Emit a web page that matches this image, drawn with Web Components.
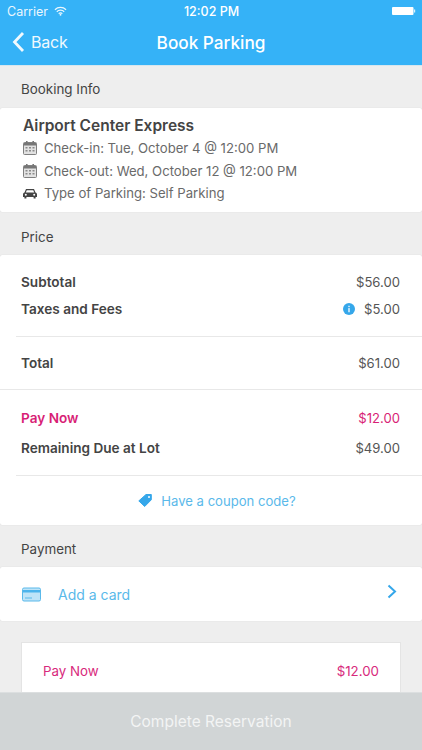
<!DOCTYPE html>
<html>
<head>
<meta charset="utf-8">
<title>Book Parking</title>
<style>
html, body { margin: 0; height: 100%; overflow: hidden; background: #eeeeee; }
body { font-family: Inter, "Noto Sans", sans-serif; color: #444; }
</style>
</head>
<body>
<book-page></book-page>

<script>
/*
Status bar
*/
class StatusBar extends HTMLElement {
	constructor() {
		super();
		this.attachShadow({ mode: 'open' });
		this.shadowRoot.innerHTML = `
		<style>
			:host { display: grid; grid-template-columns: 1fr auto 1fr; align-items: center; height: 22px; padding: 0 6px 0 7px; color: #fff; font-size: 12.5px; }
			.left { display: flex; align-items: center; gap: 6px; opacity: .9; }
			.time { font-weight: 500; }
			.right { justify-self: end; display: flex; }
		</style>
		<div class="left">Carrier
			<svg width="13" height="10" viewBox="0 0 14 10"><path d="M1 3.600a8.500 8.500 0 0 1 12 0M3 5.800a5.600 5.600 0 0 1 8 0M5 7.800a2.800 2.800 0 0 1 4 0" fill="none" stroke="#fff" stroke-width="1.300"/><circle cx="7" cy="9" r="1" fill="#fff"/></svg>
		</div>
		<div class="time">12:02 PM</div>
		<div class="right">
			<svg width="25" height="10" viewBox="0 0 25 10"><rect x="1" y="1" width="21.500" height="8" rx="1" fill="#fff"/><rect x="23" y="3.500" width="1.200" height="3" fill="#fff" opacity=".8"/></svg>
		</div>`;
	}
}
customElements.define('status-bar', StatusBar);

/*
Nav bar
*/
class NavBar extends HTMLElement {
	constructor() {
		super();
		this.attachShadow({ mode: 'open' });
		this.shadowRoot.innerHTML = `
		<style>
			:host { display: block; background: #35b2f7; height: 65px; border-bottom: 1px solid #d6e6ee; color: #fff; }
			.bar { display: grid; grid-template-columns: 1fr auto 1fr; align-items: center; height: 40px; }
			.back { display: flex; align-items: center; gap: 6px; margin-left: 12px; font-size: 16px; letter-spacing: -.2px; opacity: .93; }
			.title { font-size: 17.2px; font-weight: 500; padding-top: 1px; }
		</style>
		<status-bar></status-bar>
		<div class="bar">
			<div class="back">
				<svg width="13" height="22" viewBox="0 0 13 22"><path d="M11 2 2.500 11 11 20" fill="none" stroke="#fff" stroke-width="2.800"/></svg>
				Back
			</div>
			<div class="title"><slot></slot></div>
			<div></div>
		</div>`;
	}
}
customElements.define('nav-bar', NavBar);

/*
Section header + white panel
*/
class PageSection extends HTMLElement {
	constructor() {
		super();
		this.attachShadow({ mode: 'open' });
		this.shadowRoot.innerHTML = `
		<style>
			:host { display: block; }
			.head { height: var(--head-h, 42px); display: flex; align-items: center; padding: var(--head-pad, 4px) 21px 0; font-size: 13.4px; color: #444; box-sizing: border-box; }
			.panel { background: #fff; border-radius: 2px; box-shadow: 0 0 1px rgba(0,0,0,.18); }
		</style>
		<div class="head"></div>
		<div class="panel"><slot></slot></div>`;
		this.shadowRoot.querySelector('.head').textContent = this.getAttribute('heading');
	}
}
customElements.define('page-section', PageSection);

/*
Booking info
*/
const calendarIcon = `<svg width="14" height="14" viewBox="0 0 14 14"><rect x=".5" y="1.500" width="13" height="12" rx="1" fill="#e2e2e2" stroke="#808080"/><rect x="1" y="2" width="12" height="2.500" fill="#777"/><rect x="3" y="0" width="1.600" height="3" fill="#777"/><rect x="9.400" y="0" width="1.600" height="3" fill="#777"/><path d="M2.500 6h2v1.500h-2zM6 6h2v1.500H6zM9.500 6h2v1.500h-2zM2.500 9h2v1.500h-2zM6 9h2v1.500H6zM9.500 9h2v1.500h-2z" fill="#8a8a8a"/></svg>`;
const carIcon = `<svg width="14" height="11" viewBox="0 0 14 11"><path d="M3 1h8l1.500 3.400c.9.3 1.500 1 1.500 1.900V9h-1.400v1.400h-2V9H3.400v1.400h-2V9H0V6.300c0-.9.6-1.600 1.500-1.900z" fill="#444"/><path d="M3.800 2.200h6.400l1 2.300H2.800z" fill="#fff"/><circle cx="2.800" cy="6.800" r="1" fill="#fff"/><circle cx="11.200" cy="6.800" r="1" fill="#fff"/></svg>`;

class BookingInfo extends HTMLElement {
	constructor() {
		super();
		this.attachShadow({ mode: 'open' });
		this.shadowRoot.innerHTML = `
		<style>
			:host { display: block; height: 104px; padding: 7px 0 0 23px; box-sizing: border-box; }
			h2 { margin: 0 0 1px; font-size: 15.5px; font-weight: 600; color: #444; line-height: 21px; }
			.line { display: flex; align-items: center; gap: 7px; height: 22.500px; font-size: 13.15px; color: #6a6a6a; }
			.ic { width: 14px; display: flex; justify-content: center; }
		</style>
		<h2>Airport Center Express</h2>
		<div class="line"><span class="ic">${calendarIcon}</span>Check-in: Tue, October 4 @ 12:00 PM</div>
		<div class="line"><span class="ic">${calendarIcon}</span>Check-out: Wed, October 12 @ 12:00 PM</div>
		<div class="line"><span class="ic">${carIcon}</span>Type of Parking: Self Parking</div>`;
	}
}
customElements.define('booking-info', BookingInfo);

/*
Price row
*/
class PriceRow extends HTMLElement {
	constructor() {
		super();
		this.attachShadow({ mode: 'open' });
		this.shadowRoot.innerHTML = `
		<style>
			:host { display: flex; justify-content: space-between; align-items: center; height: 16px; font-size: 13.1px; color: #555; }
			:host([pink]) { color: #d81f76; }
			.label { font-size: 13.6px; font-weight: 600; color: #444; }
			:host([pink]) .label { color: #d81f76; }
			.val { display: flex; align-items: center; gap: 9px; }
		</style>
		<span class="label"><slot></slot></span>
		<span class="val"><slot name="icon"></slot>${this.getAttribute('value')}</span>`;
	}
}
customElements.define('price-row', PriceRow);

/*
Group of rows, separated with a hairline
*/
class PriceGroup extends HTMLElement {
	constructor() {
		super();
		this.attachShadow({ mode: 'open' });
		this.shadowRoot.innerHTML = `
		<style>
			:host { display: flex; flex-direction: column; justify-content: center; gap: var(--row-gap, 11.5px); margin-left: 16px; padding: 0 22px 0 5px; border-bottom: 1px solid #e8e8e8; box-sizing: border-box; }
			:host([full]) { margin-left: 0; padding-left: 21px; }
		</style>
		<slot></slot>`;
	}
}
customElements.define('price-group', PriceGroup);

/*
Coupon link
*/
class CouponLink extends HTMLElement {
	constructor() {
		super();
		this.attachShadow({ mode: 'open' });
		this.shadowRoot.innerHTML = `
		<style>
			:host { display: flex; justify-content: center; align-items: center; gap: 9px; height: 49px; font-size: 13.1px; color: #5ab9ea; padding-left: 12px; box-sizing: border-box; }
		</style>
		<svg width="14" height="13" viewBox="0 0 14 13"><path d="M8 .5h5.300v5.300L6.700 12.500.8 6.900z" fill="#35a7ea" stroke="#35a7ea" stroke-linejoin="round"/><circle cx="11" cy="3" r="1" fill="#fff"/></svg>
		<slot></slot>`;
	}
}
customElements.define('coupon-link', CouponLink);

/*
Add card row
*/
class AddCard extends HTMLElement {
	constructor() {
		super();
		this.attachShadow({ mode: 'open' });
		this.shadowRoot.innerHTML = `
		<style>
			:host { display: flex; align-items: center; height: 54px; padding: 0 25px 0 22px; font-size: 14px; color: #5ab9ea; }
			svg.card { margin-right: 17px; }
			.txt { flex: 1; }
			svg.chev { margin-bottom: 5px; }
		</style>
		<svg class="card" width="19" height="15" viewBox="0 0 19 15"><rect x=".5" y="1" width="18" height="13" rx="1.500" fill="#bfe4f8" stroke="#5ab9ea"/><rect x="1" y="3" width="17" height="2.500" fill="#4db4ec"/><rect x="3" y="10.500" width="7" height="1" fill="#5ab9ea"/></svg>
		<span class="txt"><slot></slot></span>
		<svg class="chev" width="10" height="15" viewBox="0 0 10 15"><path d="M1.500 1.500 8 7.500 1.500 13.500" fill="none" stroke="#35a7ea" stroke-width="2"/></svg>`;
	}
}
customElements.define('add-card', AddCard);

/*
Summary card below the payment section
*/
class SummaryCard extends HTMLElement {
	constructor() {
		super();
		this.attachShadow({ mode: 'open' });
		this.shadowRoot.innerHTML = `
		<style>
			:host { display: block; margin: 21px 21px 0; height: 120px; background: #fff; border: 1px solid #e4e4e4; box-sizing: border-box; padding: 20px 21px 0; }
			.row { display: flex; justify-content: space-between; font-size: 13.3px; color: #d8297c; }
		</style>
		<div class="row"><span>Pay Now</span><span>$12.00</span></div>`;
	}
}
customElements.define('summary-card', SummaryCard);

/*
Bottom button, lies over the page
*/
class ReserveBar extends HTMLElement {
	constructor() {
		super();
		this.attachShadow({ mode: 'open' });
		this.shadowRoot.innerHTML = `
		<style>
			:host { position: absolute; left: 0; right: 0; bottom: 0; height: 58px; background: #d1d5d6; color: #f3f4f4; display: flex; align-items: center; justify-content: center; font-size: 15.5px; border-top: 1px solid #dcdfe0; box-sizing: border-box; }
		</style>
		<slot></slot>`;
	}
}
customElements.define('reserve-bar', ReserveBar);

/*
Page
*/
class BookPage extends HTMLElement {
	constructor() {
		super();
		this.attachShadow({ mode: 'open' });
		this.shadowRoot.innerHTML = `
		<style>
			:host { display: block; position: relative; width: 422px; height: 750px; overflow: hidden; background: #eeeeee; }
		</style>
		<nav-bar>Book Parking</nav-bar>
		<page-section heading="Booking Info"><booking-info></booking-info></page-section>
		<page-section heading="Price" style="--head-h:43px;--head-pad:6px">
			<price-group style="height:82px">
				<price-row value="$56.00">Subtotal</price-row>
				<price-row value="$5.00">Taxes and Fees
					<svg slot="icon" width="12" height="12" viewBox="0 0 13 13"><circle cx="6.500" cy="6.500" r="6.500" fill="#35a7ea"/><rect x="5.800" y="5.500" width="1.400" height="4.500" fill="#fff"/><rect x="5.800" y="3" width="1.400" height="1.500" fill="#fff"/></svg>
				</price-row>
			</price-group>
			<price-group full style="height:53px"><price-row value="$61.00">Total</price-row></price-group>
			<price-group style="height:86px;--row-gap:14px">
				<price-row pink value="$12.00">Pay Now</price-row>
				<price-row value="$49.00">Remaining Due at Lot</price-row>
			</price-group>
			<coupon-link>Have a coupon code?</coupon-link>
		</page-section>
		<page-section heading="Payment" style="--head-pad:5px"><add-card>Add a card</add-card></page-section>
		<summary-card></summary-card>
		<reserve-bar>Complete Reservation</reserve-bar>`;
	}
}
customElements.define('book-page', BookPage);
</script>
</body>
</html>
